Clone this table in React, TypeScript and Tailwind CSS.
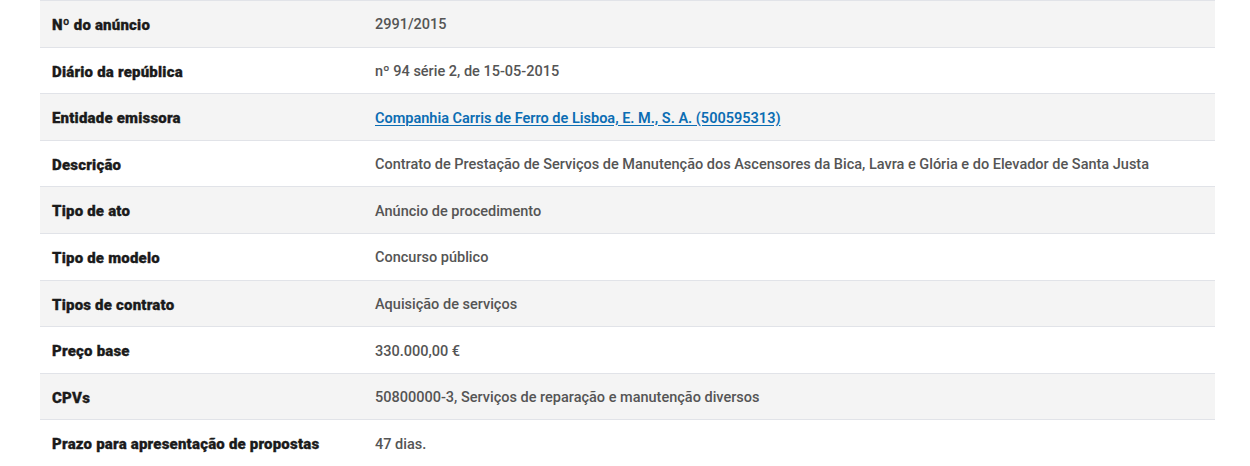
const rows: { label: string; value: string; link?: boolean }[] = [
  { label: 'Nº do anúncio', value: '2991/2015' },
  { label: 'Diário da república', value: 'nº 94 série 2, de 15-05-2015' },
  { label: 'Entidade emissora', value: 'Companhia Carris de Ferro de Lisboa, E. M., S. A. (500595313)', link: true },
  {
    label: 'Descrição',
    value:
      'Contrato de Prestação de Serviços de Manutenção dos Ascensores da Bica, Lavra e Glória e do Elevador de Santa Justa',
  },
  { label: 'Tipo de ato', value: 'Anúncio de procedimento' },
  { label: 'Tipo de modelo', value: 'Concurso público' },
  { label: 'Tipos de contrato', value: 'Aquisição de serviços' },
  { label: 'Preço base', value: '330.000,00 €' },
  { label: 'CPVs', value: '50800000-3, Serviços de reparação e manutenção diversos' },
  { label: 'Prazo para apresentação de propostas', value: '47 dias.' },
];

export default function App() {
  return (
    <div className="bg-white px-10 font-['Roboto',sans-serif] text-[14.5px]">
      <div className="w-[1175px]">
        {rows.map((r, i) => (
          <div
            key={r.label}
            className={`flex h-[46.6px] items-center border-t border-[#e1e3e8] pt-[3px] ${i % 2 === 0 ? 'bg-[#f4f4f4]' : 'bg-white'}`}
          >
            <div className="w-[335px] pl-3 text-[15px] font-black tracking-[0.2px] text-[#1b1b1b] [-webkit-text-stroke:0.3px_#1b1b1b]">
              {r.label}
            </div>
            <div className="flex-1 font-medium text-[#555555]">
              {r.link ? (
                <a href="#" className="font-semibold text-[#0b6db3] underline underline-offset-2">
                  {r.value}
                </a>
              ) : (
                r.value
              )}
            </div>
          </div>
        ))}
      </div>
    </div>
  );
}
